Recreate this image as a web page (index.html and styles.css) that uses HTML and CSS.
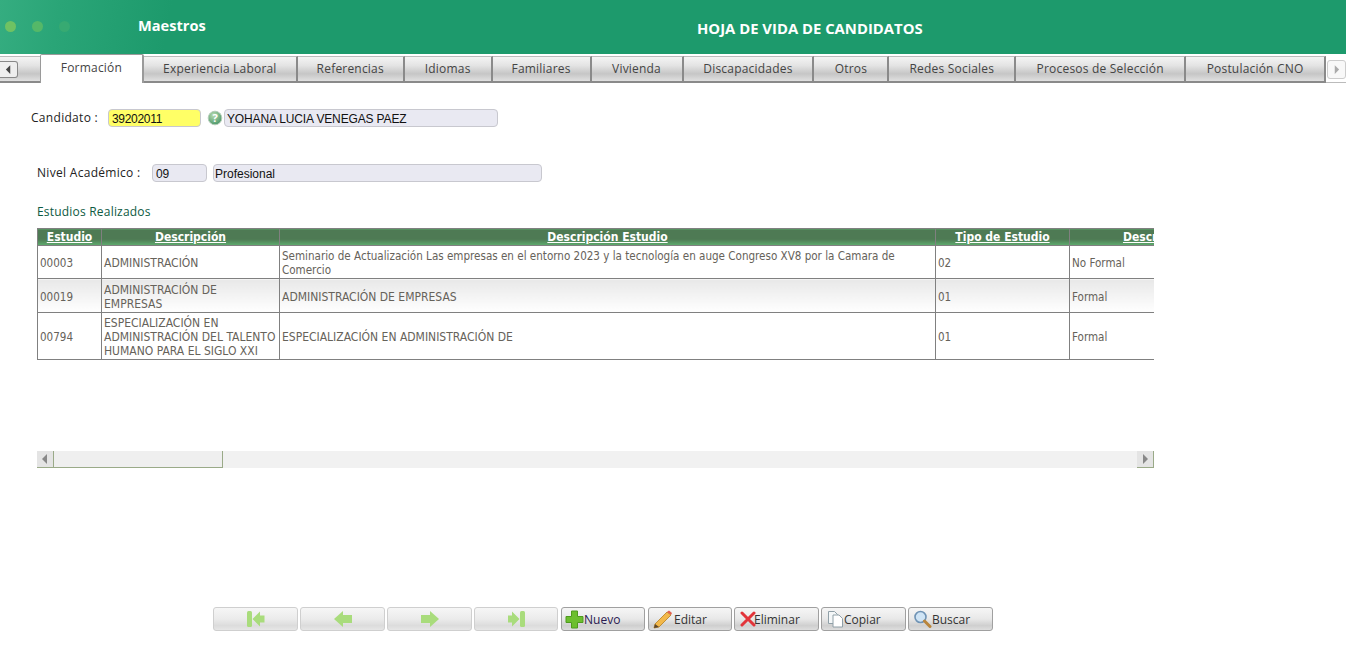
FILE: index.html
```html
<!DOCTYPE html>
<html lang="es">
<head>
<meta charset="utf-8">
<title>Hoja de vida de candidatos</title>
<link rel="stylesheet" href="styles.css">
</head>
<body>
<header class="topbar">
  <div class="dots"><i class="dot d1"></i><i class="dot d2"></i><i class="dot d3"></i></div>
  <div class="brand">Maestros</div>
  <h1 class="title">HOJA DE VIDA DE CANDIDATOS</h1>
</header>
<nav class="tabs">
  <button class="scroll left"><svg width="8" height="10" viewBox="0 0 8 10"><path d="M6 0v10L1 5z" fill="#444"/></svg></button>
  <a class="tab active w-form">Formación</a>
  <a class="tab w-exp">Experiencia Laboral</a>
  <a class="tab w-ref">Referencias</a>
  <a class="tab w-idi">Idiomas</a>
  <a class="tab w-fam">Familiares</a>
  <a class="tab w-viv">Vivienda</a>
  <a class="tab w-dis">Discapacidades</a>
  <a class="tab w-otr">Otros</a>
  <a class="tab w-red">Redes Sociales</a>
  <a class="tab w-pro">Procesos de Selección</a>
  <a class="tab w-pos">Postulación CNO</a>
  <button class="scroll right"><svg width="8" height="10" viewBox="0 0 8 10"><path d="M2 0v10l5-5z" fill="#aaa"/></svg></button>
</nav>
<main class="content">
  <div class="row row-cand">
    <label class="lbl lbl-cand">Candidato :</label>
    <input class="field f-cand" value="39202011">
    <svg class="help" width="16" height="16" viewBox="0 0 16 16"><defs><radialGradient id="h" cx=".4" cy=".3" r=".8"><stop offset="0" stop-color="#b8dcb0"/><stop offset="1" stop-color="#3f8f62"/></radialGradient></defs><circle cx="8" cy="8" r="6.800" fill="url(#h)" stroke="#b4ccb8"/><text x="8" y="12" text-anchor="middle" class="help-q">?</text></svg>
    <input class="field f-name" value="YOHANA LUCIA VENEGAS PAEZ">
  </div>
  <div class="row row-nivel">
    <label class="lbl lbl-nivel">Nivel Académico :</label>
    <input class="field f-code" value="09">
    <input class="field f-desc" value="Profesional">
  </div>
  <div class="section">Estudios Realizados</div>
  <div class="grid-wrap">
    <table class="grid">
      <colgroup><col class="c1"><col class="c2"><col class="c3"><col class="c4"><col class="c5"></colgroup>
      <thead>
        <tr><th><a>Estudio</a></th><th><a>Descripción</a></th><th><a>Descripción Estudio</a></th><th><a>Tipo de Estudio</a></th><th><a>Descripción Tipo</a></th></tr>
      </thead>
      <tbody>
        <tr class="r1"><td>00003</td><td class="up">ADMINISTRACIÓN</td><td>Seminario de Actualización Las empresas en el entorno 2023 y la tecnología en auge Congreso XV8 por la Camara de Comercio</td><td>02</td><td>No Formal</td></tr>
        <tr class="r2 alt"><td>00019</td><td class="up">ADMINISTRACIÓN DE EMPRESAS</td><td class="up">ADMINISTRACIÓN DE EMPRESAS</td><td>01</td><td>Formal</td></tr>
        <tr class="r3"><td>00794</td><td class="up">ESPECIALIZACIÓN EN ADMINISTRACIÓN DEL TALENTO HUMANO PARA EL SIGLO XXI</td><td class="up">ESPECIALIZACIÓN EN ADMINISTRACIÓN DE</td><td>01</td><td>Formal</td></tr>
      </tbody>
    </table>
  </div>
  <div class="hscroll">
    <span class="sb-btn"><svg width="6" height="10" viewBox="0 0 6 10"><path d="M5 0v10L0 5z" fill="#888"/></svg></span>
    <span class="sb-thumb"></span>
    <span class="sb-track"></span>
    <span class="sb-btn sb-end"><svg width="6" height="10" viewBox="0 0 6 10"><path d="M1 0v10l5-5z" fill="#888"/></svg></span>
  </div>
  <div class="toolbar">
    <button class="btn off"><svg width="18" height="16" viewBox="0 0 18 16"><rect x="0" y="0" width="5" height="16" rx="1.500" fill="#a9dc7c"/><path d="M5.500 8L13 .5V4.500h4.500v7H13v4z" fill="#a9dc7c"/></svg></button>
    <button class="btn off"><svg width="18" height="16" viewBox="0 0 18 16"><path d="M0 8L9 0v4h9v8H9v4z" fill="#a9dc7c"/></svg></button>
    <button class="btn off"><svg width="18" height="16" viewBox="0 0 18 16"><path d="M18 8L9 0v4H0v8h9v4z" fill="#a9dc7c"/></svg></button>
    <button class="btn off w84"><svg width="17" height="16" viewBox="0 0 17 16"><rect x="12" y="0" width="5" height="16" rx="1.500" fill="#a9dc7c"/><path d="M11.500 8L4 .5V4.500H0v7h4v4z" fill="#a9dc7c"/></svg></button>
    <button class="btn gap3 w84"><svg width="19" height="19" viewBox="0 0 19 19"><path d="M6.500 1h6v5.500h5.500v6h-5.500v5.500h-6v-5.500h-5.500v-6h5.500z" fill="#6cbf2e" stroke="#4e9a1e"/></svg><span class="txt-nuevo">Nuevo</span></button>
    <button class="btn gap3 w84"><svg class="ic-edit" width="21" height="19" viewBox="0 0 21 19"><path d="M3 14L15 2l4 3L7 17l-5 1z" fill="#f2b84b" stroke="#b57f20" stroke-width=".8"/><path d="M15 2l2-1.500 3 2.500-1 2z" fill="#e2604f"/><path d="M2 18l1-4 4 3z" fill="#5a4630"/></svg><span>Editar</span></button>
    <button class="btn"><svg class="ic-del" width="16" height="16" viewBox="0 0 16 16"><path d="M2 2l12 12M14 2L2 14" stroke="#e2343a" stroke-width="3" stroke-linecap="round"/></svg><span>Eliminar</span></button>
    <button class="btn"><svg class="ic-copy" width="17" height="18" viewBox="0 0 17 18"><path d="M1.500 1.500h6l3 3v9h-9z" fill="#f4f7f8" stroke="#90a0a8"/><path d="M6 5h6l3.500 3.500v8.500H6z" fill="#fff" stroke="#90a0a8"/></svg><span>Copiar</span></button>
    <button class="btn"><svg class="ic-find" width="19" height="18" viewBox="0 0 19 18"><circle cx="7.500" cy="7" r="5.500" fill="#cfe4f5" stroke="#6f93b5" stroke-width="1.600"/><path d="M11.500 11l5.500 5.500" stroke="#b9853c" stroke-width="3" stroke-linecap="round"/></svg><span>Buscar</span></button>
  </div>
</main>
</body>
</html>
```

FILE: styles.css
```css
* { box-sizing: border-box; }
html, body { margin: 0; padding: 0; background: #fff; }
body { width: 1346px; height: 654px; overflow: hidden; font-family: "Open Sans", sans-serif; color: #222; }

/* Header */
.topbar {
  height: 54px;
  display: flex;
  align-items: center;
  background: linear-gradient(100deg, #35ad80 0, #2aa577 60px, #1d9a6c 170px);
  color: #fff;
}
.dots { display: flex; gap: 16px; width: 138px; padding-left: 5px; margin-top: -1px; }
.dot { width: 11px; height: 11px; border-radius: 50%; display: block; }
.d1 { background: #6fc263; }
.d2 { background: #55b868; }
.d3 { background: #37aa72; }
.brand { font-size: 14.600px; font-weight: 700; width: 559px; margin-top: -5px; }
.title { margin: 1px 0 0; font-size: 14.850px; font-weight: 700; line-height: 18px; }

/* Tabs */
.tabs { height: 29px; display: flex; align-items: flex-end; }
.tab {
  height: 27px;
  display: flex; align-items: center; justify-content: center;
  font-size: 12px;
  letter-spacing: .2px;
  color: #444;
  border-right: 2px solid #8a8a8a;
  border-top: 1px solid #bbb;
  border-bottom: 2px solid #8a8a8a;
  background: linear-gradient(#f4f4f4 0, #e4e4e4 35%, #c6c6c6 70%, #e0e0e0 100%);
  padding-bottom: 1px;
}
.tab.active {
  height: 29px;
  background: #fff;
  border: 1px solid #9a9a9a;
  border-bottom: 0;
  border-right: 2px solid #9a9a9a;
  border-radius: 2px 2px 0 0;
  padding-bottom: 3px;
}
.w-form { width: 104px; }
.w-exp { width: 154px; }
.w-ref { width: 107px; }
.w-idi { width: 88px; }
.w-fam { width: 99px; }
.w-viv { width: 92px; }
.w-dis { width: 131px; }
.w-otr { width: 75px; }
.w-red { width: 127px; }
.w-pro { width: 170px; }
.w-pos { width: 140px; }
.scroll {
  height: 27px; padding: 0; border: 0; border-bottom: 2px solid #8a8a8a; border-top: 1px solid #bbb;
  display: flex; align-items: center; justify-content: center;
  background: linear-gradient(#f4f4f4, #e4e4e4 35%, #c6c6c6 70%, #e0e0e0);
}
.scroll.left { width: 40px; justify-content: flex-start; }
.scroll.left svg { width: 18px; height: 17px; padding: 3px 5px; border: 1px solid #888; border-left: 0; border-radius: 0 3px 3px 0; background: #eee; }
.scroll.right { width: 20px; background: #fff; border-top: 0; border-bottom: 1px solid #bbb; }
.scroll.right svg { width: 19px; height: 19px; padding: 4px 5px; border: 1px solid #ccc; border-radius: 3px; background: #f8f8f8; }

/* Form */
.row { display: flex; align-items: center; }
.row-cand { margin: 26px 0 0 31px; height: 18px; }
.row-nivel { margin: 37px 0 0 37px; height: 18px; }
.lbl { font-size: 12px; letter-spacing: .3px; color: #222; white-space: nowrap; padding-bottom: 2px; }
.lbl-cand { width: 77px; }
.lbl-nivel { width: 115px; }
.field {
  height: 18px;
  padding: 1px 2px 0 2px;
  border: 1px solid #c8c8cf;
  border-radius: 4px;
  background: #e9e9f2;
  font: 12px "Liberation Sans", Arial, sans-serif;
  letter-spacing: -.15px;
  color: #111;
}
.f-cand { width: 93px; background: #ffff66; padding-left: 3px; letter-spacing: -.3px; }
.help { margin: 0 0 0 6px; flex: none; }
.help-q { font: 700 11px "Open Sans", sans-serif; fill: #fff; }
.f-name { width: 274px; margin-left: 1px; }
.f-code { width: 55px; padding-left: 3px; }
.f-desc { width: 329px; margin-left: 6px; padding-left: 1px; letter-spacing: 0; }

.section { margin: 21px 0 0 37px; height: 18px; font-size: 12px; line-height: 18px; letter-spacing: .2px; color: #0d5a42; }

/* Grid */
.grid-wrap { margin: 7px 0 0 37px; width: 1117px; height: 223px; overflow: hidden; }
.grid { border-collapse: collapse; table-layout: fixed; width: 1240px; font-family: "DejaVu Sans", Tahoma, sans-serif; font-stretch: condensed; font-size: 11.550px; }
.c1 { width: 64px; } .c2 { width: 178px; } .c3 { width: 656px; } .c4 { width: 134px; } .c5 { width: 208px; }
.grid th {
  height: 17px; padding: 0; border: 1px solid #808080;
  background: linear-gradient(#4e7a54 0, #4e7a54 62%, #5fae6f 100%);
  line-height: 15px; font-size: 12px; font-weight: 700;
}
.grid th a { color: #fff; text-decoration: underline; }
.grid td { border: 1px solid #808080; padding: 2px 2px 0; color: #66625a; line-height: 14px; vertical-align: middle; overflow: hidden; }
.grid td.up { font-size: 12px; }
.r1 td { height: 33px; }
.r2 td { height: 34px; }
.r3 td { height: 47px; }
.alt td { background: linear-gradient(#e8e8e8, #ffffff); }

/* Horizontal scrollbar */
.hscroll { margin-left: 37px; width: 1117px; height: 17px; display: flex; background: #f1f1f1; }
.sb-btn { width: 17px; height: 17px; display: flex; align-items: center; justify-content: center; background: #e4e4e4; border-bottom: 1px solid #9aaa88; border-right: 1px solid #9aaa88; }
.sb-thumb { width: 169px; height: 17px; background: #efefef; border-right: 1px solid #9aaa88; border-bottom: 1px solid #9aaa88; }
.sb-track { flex: 1; }

/* Toolbar */
.toolbar { display: flex; gap: 2px; margin: 139px 0 0 213px; }
.btn {
  width: 85px; height: 24px; padding: 0 0 0 3px;
  display: flex; align-items: center; justify-content: flex-start;
  border: 1px solid #a0a0a0; border-radius: 3px;
  background: linear-gradient(#f6f6f6, #e8e8e8 50%, #cfcfcf 80%, #dedede);
  font: 12px "Open Sans", sans-serif; color: #333;
}
.btn.off { justify-content: center; padding: 0; border-color: #cfcfcf; background: linear-gradient(#f6f6f6, #ebebeb 50%, #dcdcdc 80%, #e6e6e6); }
.w84 { width: 84px; }
.gap3 { margin-left: 1px; }
.ic-edit { margin-right: 1px; }
.ic-del { margin: 0 -2px 0 2px; }
.ic-copy { margin-left: 2px; }
.ic-find { margin-left: 1px; }
.txt-nuevo { color: #2a1a50; }
```
